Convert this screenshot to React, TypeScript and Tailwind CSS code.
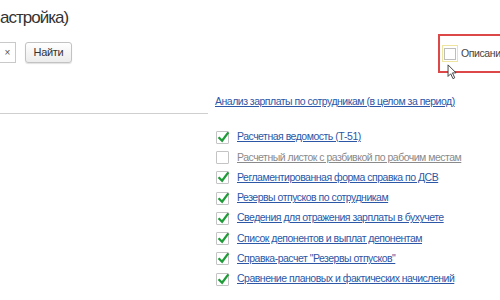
const reports = [
    { title: "Расчетная ведомость (Т-51)", checked: true },
    { title: "Расчетный листок с разбивкой по рабочим местам", checked: false },
    { title: "Регламентированная форма справка по ДСВ", checked: true },
    { title: "Резервы отпусков по сотрудникам", checked: true },
    { title: "Сведения для отражения зарплаты в бухучете", checked: true },
    { title: "Список депонентов и выплат депонентам", checked: true },
    { title: "Справка-расчет \"Резервы отпусков\"", checked: true },
    { title: "Сравнение плановых и фактических начислений", checked: true },
];

function CheckBox({ checked }: { checked: boolean }) {
    return (
        <span className="relative w-[13px] h-[13px] border border-[#c4c4c4] bg-white shrink-0 rounded-[1px]">
            {checked && (
                <svg viewBox="0 0 14 14" className="absolute left-[0px] top-[-1px] w-[13px] h-[13px]">
                    <path d="M2.5 7.5 L5.5 10.5 L11.5 2.5" fill="none" stroke="#1f9b38" strokeWidth="2.4" strokeLinecap="square" />
                </svg>
            )}
        </span>
    );
}

export default function App() {
    return (
        <div className="w-[500px] h-[300px] bg-white overflow-hidden relative font-['Liberation_Sans',Arial,sans-serif] text-[#333]">
            {/* Title */}
            <div className="h-[36px] pt-[7px] text-[17px] leading-[22px] tracking-[-1px] text-[#333]">астройка)</div>

            {/* Toolbar */}
            <div className="flex items-start justify-between h-[40px]">
                <div className="flex items-center gap-[9px] mt-[6px]">
                    <button className="w-[16px] h-[21px] border border-[#c9c9c9] border-l-0 bg-white text-[10px] text-[#555] flex items-center justify-center">×</button>
                    <button className="w-[47px] h-[21px] border border-[#c2c2c2] rounded-[3px] bg-gradient-to-b from-white to-[#ececec] shadow-[0_1px_1px_rgba(0,0,0,0.12)] text-[11px] tracking-[-0.3px] text-[#333]">Найти</button>
                </div>
                <div className="mt-[-2px] w-[62px] h-[39px] border-2 border-r-0 border-[#dc4747] flex items-center pl-[2px]">
                    <span className="w-[16px] h-[17px] border border-[#efe3a0] flex items-center justify-center bg-white shrink-0">
                        <span className="w-[12px] h-[12px] border border-[#bdbdbd] bg-white" />
                    </span>
                    <span className="ml-[3px] text-[10.5px] tracking-[-0.4px] text-[#444] whitespace-nowrap">Описания</span>
                </div>
            </div>

            {/* Main */}
            <div className="flex">
                <div className="w-[208px] h-[38px] border-b border-[#cfcfcf]" />
                <div className="ml-[7px] pt-[12px]">
                    <a className="text-[10.5px] tracking-[-0.5px] text-[#2c57a6] underline whitespace-nowrap">Анализ зарплаты по сотрудникам (в целом за период)</a>
                </div>
            </div>

            <div className="ml-[216px] mt-[13px] flex flex-col">
                {reports.map((r) => (
                    <div key={r.title} className="h-[20.3px] flex items-center gap-[8px]">
                        <CheckBox checked={r.checked} />
                        <a className={`text-[10.5px] tracking-[-0.5px] underline whitespace-nowrap ${r.checked ? "text-[#2c57a6]" : "text-[#8a8a8a]"}`}>{r.title}</a>
                    </div>
                ))}
            </div>

            {/* Mouse cursor */}
            <svg viewBox="0 0 12 18" className="absolute left-[447px] top-[64px] w-[11px] h-[16px]">
                <path d="M1 1 L1 14 L4 11 L6.5 16.5 L8.5 15.5 L6 10 L10 10 Z" fill="white" stroke="#333" strokeWidth="1" strokeLinejoin="round" />
            </svg>
        </div>
    );
}
